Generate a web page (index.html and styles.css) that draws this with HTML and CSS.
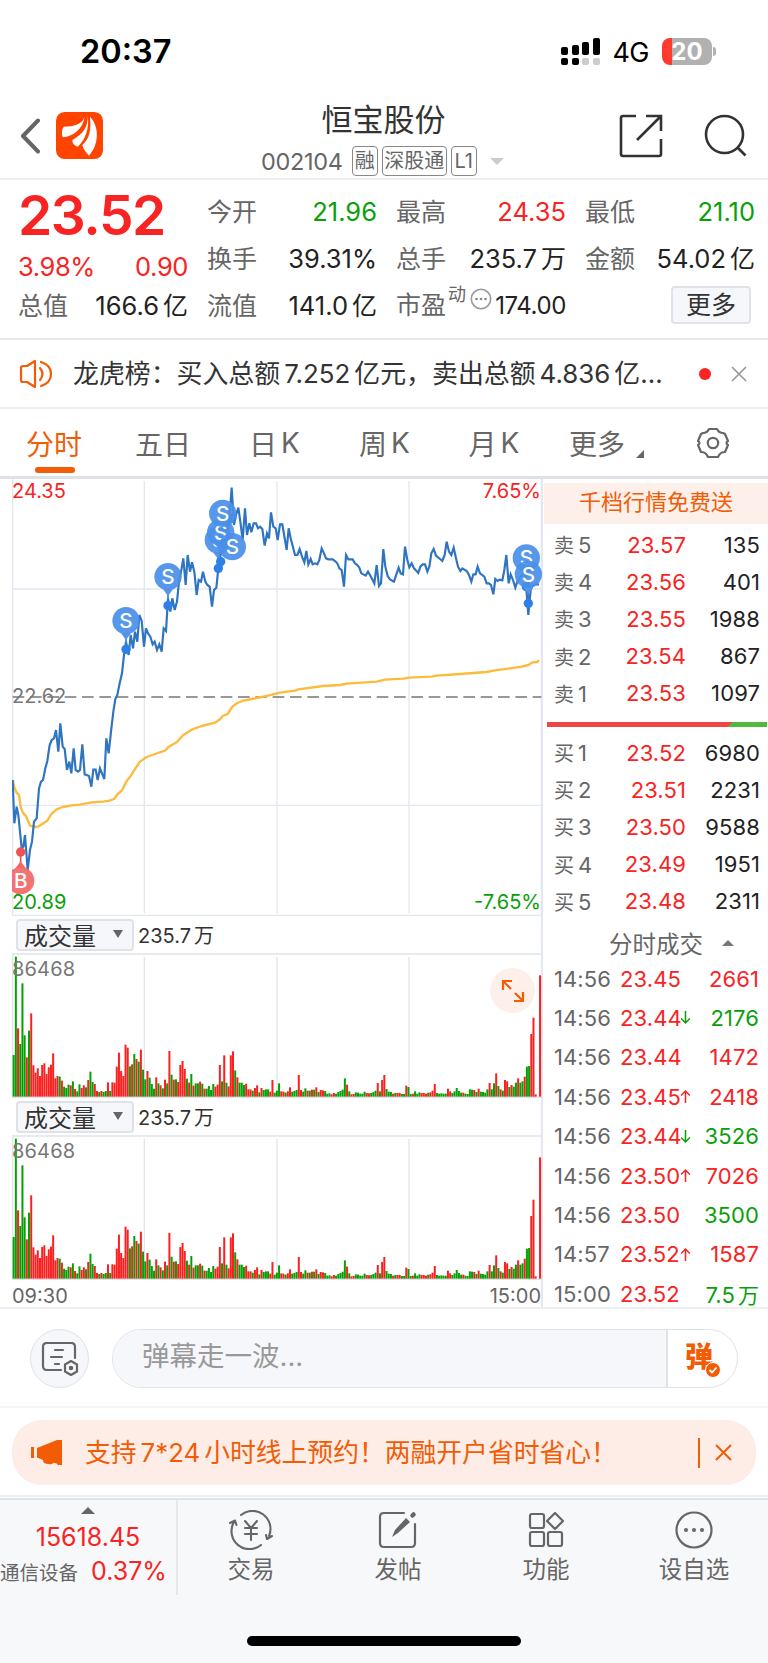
FILE: index.html
```html
<!DOCTYPE html>
<html lang="zh-CN">
<head>
    <meta charset="UTF-8">
    <meta name="viewport" content="width=device-width, initial-scale=1.0">
    <title>恒宝股份 002104</title>
    <link rel="stylesheet" href="styles.css">
</head>
<body>
    <div class="status-bar">
        <span class="clock">20:37</span>
        <div class="status-right">
            <svg class="signal" width="39" height="28" viewBox="0 0 39 28">
                <g fill="#000">
                    <rect x="0" y="9" width="7" height="8" rx="2"/><rect x="11" y="7" width="7" height="10" rx="2"/>
                    <rect x="21" y="4" width="7" height="13" rx="2"/><rect x="32" y="0" width="7" height="17" rx="2"/>
                    <rect x="0" y="20" width="7" height="7" rx="2"/><rect x="11" y="20" width="7" height="7" rx="2"/>
                </g>
                <rect x="21" y="20" width="7" height="7" rx="2" fill="#ccc"/><rect x="32" y="20" width="7" height="7" rx="2" fill="#ccc"/>
            </svg>
            <span class="network">4G</span>
            <span class="battery">20</span>
            <span class="battery-tip"></span>
        </div>
    </div>

    <header class="header">
        <div class="header-left">
            <svg width="22" height="36" viewBox="0 0 22 36"><path d="M18 2.500 3 18 18 33.500" fill="none" stroke="#666" stroke-width="4" stroke-linecap="round" stroke-linejoin="round"/></svg>
            <svg class="logo" width="47" height="47" viewBox="0 0 141 141">
                <rect width="141" height="141" rx="26" fill="#ff4400"/>
                <path d="M86 14C80 34 58 44 23 44 17 54 16 66 20 76 52 72 80 52 86 14Z" fill="#fff"/>
                <path d="M95 12C96 44 82 66 50 83 47 93 54 100 65 104 88 84 101 48 95 12Z" fill="#fff"/>
                <path d="M102 14C106 56 101 78 79 99 82 112 90 122 99 131 129 98 131 44 102 14Z" fill="#fff"/>
            </svg>
        </div>
        <div class="header-title">
            <h1>恒宝股份</h1>
            <div class="code-row">
                <span class="code">002104</span>
                <span class="tag">融</span><span class="tag tag-wide">深股通</span><span class="tag">L1</span>
                <span class="caret"></span>
            </div>
        </div>
        <div class="header-right">
            <svg width="44" height="44" viewBox="0 0 44 44" fill="none" stroke="#333" stroke-width="2.600">
                <path d="M17 2H4Q2 2 2 4V40Q2 42 4 42H40Q42 42 42 40V25"/><path d="M27 2H42V17M42 2 18 26"/>
            </svg>
            <svg width="43" height="43" viewBox="0 0 43 43" fill="none" stroke="#333" stroke-width="2.600">
                <circle cx="20.500" cy="20.500" r="18.500"/><path d="M33 33 41.500 41.500"/>
            </svg>
        </div>
    </header>

    <section class="quote">
        <div class="quote-main">
            <div class="price red">23.52</div>
            <div class="change red"><span>3.98%</span><span>0.90</span></div>
            <div class="cell"><label>总值</label><b>166.6<i>亿</i></b></div>
        </div>
        <div class="quote-col">
            <div class="cell"><label>今开</label><b class="green">21.96</b></div>
            <div class="cell"><label>换手</label><b>39.31%</b></div>
            <div class="cell"><label>流值</label><b>141.0<i>亿</i></b></div>
        </div>
        <div class="quote-col">
            <div class="cell"><label>最高</label><b class="red">24.35</b></div>
            <div class="cell"><label>总手</label><b>235.7<i>万</i></b></div>
            <div class="cell pe"><label>市盈<sup>动</sup></label>
                <svg class="more-dots" width="22" height="22" viewBox="0 0 22 22"><circle cx="11" cy="11" r="9.700" fill="none" stroke="#999" stroke-width="1.600"/><g fill="#888"><circle cx="6.500" cy="11" r="1.300"/><circle cx="11" cy="11" r="1.300"/><circle cx="15.500" cy="11" r="1.300"/></g></svg>
                <b>174.00</b></div>
        </div>
        <div class="quote-col">
            <div class="cell"><label>最低</label><b class="green">21.10</b></div>
            <div class="cell"><label>金额</label><b>54.02<i>亿</i></b></div>
            <div class="cell"><button class="more-btn">更多</button></div>
        </div>
    </section>

    <section class="notice">
        <svg width="34" height="30" viewBox="0 0 34 30" fill="none" stroke="#f25c05" stroke-width="2.200" stroke-linejoin="round" stroke-linecap="round">
            <path d="M16 2V28L8 23H4Q2 23 2 21V9Q2 7 4 7H8Z"/><path d="M21 9Q26 15 21 21M22 3Q32 6 32 15 32 24 22 27"/>
        </svg>
        <p>龙虎榜：买入总额<em>7.252</em>亿元，卖出总额<em>4.836</em>亿...</p>
        <span class="dot"></span>
        <svg width="16" height="16" viewBox="0 0 16 16"><path d="M1 1 15 15M15 1 1 15" stroke="#999" stroke-width="1.700"/></svg>
    </section>

    <nav class="tabs">
        <a class="active">分时</a>
        <a>五日</a>
        <a>日<em>K</em></a>
        <a>周<em>K</em></a>
        <a>月<em>K</em></a>
        <a>更多<span class="corner"></span></a>
        <a><svg width="32" height="32" viewBox="0 0 32 32" fill="none" stroke="#666" stroke-width="2.200" stroke-linejoin="round"><path d="M12 2H20Q22 6 26 6L28 7 31 14Q28 16 31 18L28 25Q23 25 21 30H11Q9 25 4 25L1 18Q4 16 1 14L4 7 6 6Q10 6 12 2Z"/><circle cx="16" cy="16" r="5.200"/></svg></a>
    </nav>

    <main class="market">
        <div class="charts">
            <svg class="price-chart" width="530" height="437" viewBox="36 12 1590 1311">
                <g stroke="#e3e7ef" stroke-width="4">
                    <path d="M38 9V1320M433 18V1315M831 18V1315M1227 18V1315M1624 9V1320M38 342H1624M38 991H1624M36 1321H1626"/>
                </g>
                <path d="M38 666H1624" stroke="#777" stroke-width="4" stroke-dasharray="35 17"/>
                <g font-size="60">
                    <text x="36" y="69" fill="#f82323">24.35</text>
                    <text x="1623" y="69" fill="#f82323" text-anchor="end">7.65%</text>
                    <text x="36" y="685" fill="#777">22.62</text>
                    <text x="36" y="1301" fill="#0a9f0a">20.89</text>
                    <text x="1623" y="1301" fill="#0a9f0a" text-anchor="end">-7.65%</text>
                </g>
                <polyline id="avgLine" fill="none" stroke="#fdbb3c" stroke-width="7" stroke-linejoin="round"/>
                <polyline id="priceLine" fill="none" stroke="#2f74c0" stroke-width="6.5"/>
                <g id="markers"></g>
            </svg>
            <div class="vol-head"><button>成交量<span></span></button><em>235.7<i>万</i></em></div>
            <div class="vol-box">
                <svg class="vol-chart" width="530" height="145" viewBox="36 129 1590 435"></svg>
                <span class="expand"><svg width="24" height="24" viewBox="0 0 24 24" fill="none" stroke="#f25c05" stroke-width="2.200"><path d="M2 11V2H11M2 2 10 10M22 13V22H13M22 22 14 14"/></svg></span>
            </div>
            <div class="vol-head"><button>成交量<span></span></button><em>235.7<i>万</i></em></div>
            <div class="vol-box">
                <svg class="vol-chart" width="530" height="145" viewBox="36 129 1590 435"></svg>
            </div>
            <div class="time-axis"><span>09:30</span><span>15:00</span></div>
        </div>

        <aside class="book">
            <div class="promo-top">千档行情免费送</div>
            <div class="level"><span>卖<em>5</em></span><span class="red">23.57</span><span>135</span></div>
            <div class="level"><span>卖<em>4</em></span><span class="red">23.56</span><span>401</span></div>
            <div class="level"><span>卖<em>3</em></span><span class="red">23.55</span><span>1988</span></div>
            <div class="level"><span>卖<em>2</em></span><span class="red">23.54</span><span>867</span></div>
            <div class="level"><span>卖<em>1</em></span><span class="red">23.53</span><span>1097</span></div>
            <div class="ratio"></div>
            <div class="level"><span>买<em>1</em></span><span class="red">23.52</span><span>6980</span></div>
            <div class="level"><span>买<em>2</em></span><span class="red">23.51</span><span>2231</span></div>
            <div class="level"><span>买<em>3</em></span><span class="red">23.50</span><span>9588</span></div>
            <div class="level"><span>买<em>4</em></span><span class="red">23.49</span><span>1951</span></div>
            <div class="level"><span>买<em>5</em></span><span class="red">23.48</span><span>2311</span></div>
            <div class="trades-title">分时成交<span></span></div>
            <div class="trade"><span>14:56</span><span class="red">23.45</span><span></span><span class="red">2661</span></div>
            <div class="trade"><span>14:56</span><span class="red">23.44</span><svg class="down" viewBox="0 0 10 12"><path d="M5 0V11M1 7 5 11 9 7"/></svg><span class="green">2176</span></div>
            <div class="trade"><span>14:56</span><span class="red">23.44</span><span></span><span class="red">1472</span></div>
            <div class="trade"><span>14:56</span><span class="red">23.45</span><svg class="up" viewBox="0 0 10 12"><path d="M5 12V1M1 5 5 1 9 5"/></svg><span class="red">2418</span></div>
            <div class="trade"><span>14:56</span><span class="red">23.44</span><svg class="down" viewBox="0 0 10 12"><path d="M5 0V11M1 7 5 11 9 7"/></svg><span class="green">3526</span></div>
            <div class="trade"><span>14:56</span><span class="red">23.50</span><svg class="up" viewBox="0 0 10 12"><path d="M5 12V1M1 5 5 1 9 5"/></svg><span class="red">7026</span></div>
            <div class="trade"><span>14:56</span><span class="red">23.50</span><span></span><span class="green">3500</span></div>
            <div class="trade"><span>14:57</span><span class="red">23.52</span><svg class="up" viewBox="0 0 10 12"><path d="M5 12V1M1 5 5 1 9 5"/></svg><span class="red">1587</span></div>
            <div class="trade"><span>15:00</span><span class="red">23.52</span><span></span><span class="green">7.5<i>万</i></span></div>
        </aside>
    </main>

    <section class="comment">
        <button class="round-btn">
            <svg width="38" height="34" viewBox="0 0 38 34" fill="none" stroke="#666" stroke-width="2.200" stroke-linecap="round" stroke-linejoin="round">
                <path d="M20 28H6Q2 28 2 24V5Q2 1 6 1H30Q34 1 34 5V16"/><path d="M14 8H22M10 15H21M14 22H18"/>
                <path d="M30 19 36 22.500V29.500L30 33 24 29.500V22.500Z"/><circle cx="30" cy="26" r="1.200" fill="#666"/>
            </svg>
        </button>
        <div class="comment-input">
            <span class="placeholder">弹幕走一波...</span>
            <span class="danmu">弹<svg width="16" height="16" viewBox="0 0 16 16"><circle cx="8" cy="8" r="7.500" fill="#f25c05" stroke="#fff" stroke-width="1"/><path d="M4.500 8 7 10.500 11.500 5.500" fill="none" stroke="#fff" stroke-width="1.800"/></svg></span>
        </div>
    </section>

    <section class="promo">
        <div class="promo-pill">
            <svg width="31" height="27" viewBox="0 0 31 27" fill="#f25c05"><rect x="0" y="8" width="3" height="11"/><path d="M6 9 26 1H31V26H27L25 24H22Q21 26 17 25 12 25 12 21L6 18.500Z"/></svg>
            <p>支持<em>7*24</em>小时线上预约！两融开户省时省心！</p>
            <span class="bar"></span>
            <svg width="17" height="17" viewBox="0 0 17 17"><path d="M1 1 16 16M16 1 1 16" stroke="#f25c05" stroke-width="2"/></svg>
        </div>
    </section>

    <footer class="footer">
        <div class="index-cell">
            <span class="up-tri"></span>
            <div class="index-value red">15618.45</div>
            <div class="index-row"><span>通信设备</span><span class="red">0.37%</span></div>
        </div>
        <a><svg width="44" height="40" viewBox="0 0 44 40" fill="none" stroke="#666" stroke-width="2.100" stroke-linecap="round" stroke-linejoin="round">
            <path d="M12 5A18 18 0 0 1 40 26M32 35A18 18 0 0 1 5 12M1 13 6 10.500 7.500 15M43 26 38 29 37 25"/>
            <path d="M16 11 22 18 28 11M16 18H28M16 24H28M22 18V30"/></svg>交易</a>
        <a><svg width="44" height="40" viewBox="0 0 44 40" fill="none" stroke="#666" stroke-width="2.200" stroke-linecap="round">
            <path d="M28 3H8Q4 3 4 7V33Q4 37 8 37H35Q39 37 39 33V14"/><path d="M36.500 5.500 37.500 4.500" stroke-width="4.500"/><path d="M30 8 34 12 22 23 16 27 19 20Z" fill="#666" stroke="none"/></svg>发帖</a>
        <a><svg width="44" height="40" viewBox="0 0 44 40" fill="none" stroke="#666" stroke-width="2.200" stroke-linejoin="round">
            <rect x="6" y="4" width="14" height="14" rx="2"/><rect x="6" y="22" width="14" height="14" rx="2"/><rect x="24" y="22" width="14" height="14" rx="2"/><path d="M31 3 39 11 31 19 23 11Z"/></svg>功能</a>
        <a><svg width="44" height="40" viewBox="0 0 44 40"><circle cx="22" cy="20" r="17.500" fill="none" stroke="#666" stroke-width="2.200"/><g fill="#666"><circle cx="14" cy="20" r="2"/><circle cx="22" cy="20" r="2"/><circle cx="30" cy="20" r="2"/></g></svg>设自选</a>
    </footer>
    <div class="home-area"><span></span></div>

    <script src="script.js"></script>
</body>
</html>
```
FILE: styles.css
```css
* {
    box-sizing: border-box;
}
body {
    margin: 0;
    width: 768px;
    height: 1663px;
    overflow: hidden;
    background: #fff;
    color: #222;
    font-family: Inter, "Noto Sans CJK SC", sans-serif;
}
em, i, b {
    font-style: normal;
    font-weight: 400;
}
h1, p {
    margin: 0;
    font-weight: 400;
}
button {
    padding: 0;
    font-family: inherit;
    color: #333;
    background: #f6f7fa;
    border: 2px solid #dfe2e8;
    border-radius: 4px;
}
svg {
    display: block;
    flex: none;
}
.red {
    color: #f82323 !important;
}
.green {
    color: #0a9f0a !important;
}

/* status bar */
.status-bar {
    display: flex;
    justify-content: space-between;
    align-items: center;
    height: 102px;
    padding: 1px 52px 0 80px;
}
.clock {
    font-size: 32.5px;
    font-weight: 600;
    color: #000;
}
.status-right {
    display: flex;
    align-items: center;
}
.network {
    margin: 2px 13px 0 12px;
    font-size: 27px;
    letter-spacing: -0.5px;
    color: #000;
}
.battery {
    width: 50px;
    height: 27px;
    border-radius: 8px;
    background: linear-gradient(90deg, #ff3b30 10px, #b1b1b1 10px);
    color: #fff;
    font-size: 24px;
    font-weight: 700;
    line-height: 27px;
    text-align: center;
}
.battery-tip {
    width: 3px;
    height: 9px;
    margin-left: 1px;
    border-radius: 0 4px 4px 0;
    background: #b1b1b1;
}

/* header */
.header {
    display: grid;
    grid-template-columns: 230px 1fr 230px;
    height: 78px;
    border-bottom: 2px solid #eee;
}
.header-left {
    display: flex;
    align-items: center;
    padding: 0 0 9px 20px;
}
.header-left .logo {
    margin-left: 14px;
}
.header-title {
    text-align: center;
    color: #333;
}
.header-title h1 {
    margin-right: 1px;
    font-size: 31px;
    line-height: 35px;
}
.code-row {
    display: flex;
    align-items: center;
    height: 30px;
    margin: 9px 0 0 31px;
    color: #666;
}
.code {
    margin-right: 9px;
    font-size: 23.5px;
    letter-spacing: -0.3px;
}
.tag {
    width: 26px;
    height: 30px;
    margin-right: 4px;
    border: 1.5px solid #888;
    border-radius: 4px;
    font-size: 20px;
    line-height: 28px;
}
.tag-wide {
    width: 65px;
}
.caret {
    margin-left: 9px;
    border: 7px solid transparent;
    border-top-color: #ccc;
    border-bottom: none;
}
.header-right {
    display: flex;
    justify-content: flex-end;
    align-items: center;
    gap: 41px;
    padding: 0 21px 9px 0;
}

/* quote numbers */
.quote {
    display: grid;
    grid-template-columns: repeat(4, 170px);
    column-gap: 19px;
    height: 160px;
    padding: 6px 0 0 18px;
    border-bottom: 2px solid #e9e9e9;
}
.price {
    height: 67px;
    font-size: 55px;
    font-weight: 600;
    line-height: 59px;
    letter-spacing: -1.4px;
}
.change {
    display: flex;
    justify-content: space-between;
    align-items: center;
    height: 27px;
    font-size: 25.5px;
    letter-spacing: -0.4px;
}
.cell {
    display: flex;
    align-items: baseline;
    height: 47px;
    font-size: 25px;
    line-height: 51px;
    white-space: nowrap;
    color: #222;
}
.cell label {
    color: #666;
}
.cell b {
    margin-left: auto;
    font-size: 25.5px;
}
.cell i {
    margin-left: 4px;
    font-size: 25px;
}
.pe b {
    font-size: 24px;
    letter-spacing: -0.4px;
}
.cell sup {
    position: relative;
    top: -13px;
    margin-left: 2px;
    font-size: 18px;
    line-height: 0;
    vertical-align: baseline;
}
.more-dots {
    align-self: center;
    margin: -9px 0 0 4px;
}
.more-btn {
    align-self: center;
    width: 80px;
    height: 38px;
    margin: 2px 4px 0 auto;
    font-size: 25px;
    line-height: 32px;
}

/* notice */
.notice {
    display: flex;
    align-items: center;
    height: 69px;
    padding-left: 19px;
    border-bottom: 2px solid #eee;
    color: #333;
}
.notice p {
    width: 610px;
    margin-left: 20px;
    font-size: 25.9px;
    line-height: 40px;
    white-space: nowrap;
}
.notice p em {
    margin: 0 4px;
}
.dot {
    width: 12px;
    height: 12px;
    margin: 0 20px 0 16px;
    border-radius: 50%;
    background: #f82323;
}

/* tabs */
.tabs {
    display: grid;
    grid-template-columns: 108px 110px 113px 107px 112px 113px 100px;
    height: 70px;
    border-bottom: 3px solid #dfe1e8;
}
.tabs a {
    position: relative;
    display: flex;
    justify-content: center;
    align-items: center;
    font-size: 28px;
    color: #666;
}
.tabs em {
    margin-left: 4px;
}
.tabs .active {
    color: #f25c05;
}
.tabs .active::after {
    content: "";
    position: absolute;
    left: 35px;
    bottom: 3px;
    width: 40px;
    height: 6px;
    border-radius: 3px;
    background: #f25c05;
}
.corner {
    margin: 22px 0 0 11px;
    border-left: 8px solid transparent;
    border-bottom: 8px solid #666;
}

/* charts */
.market {
    display: flex;
    height: 830px;
    border-bottom: 2px solid #eceef2;
}
.charts {
    width: 543px;
    padding-left: 12px;
    border-right: 2px solid #e3e7ef;
}
.vol-head {
    display: flex;
    align-items: center;
    height: 37px;
    padding-left: 4px;
    font-size: 20px;
    color: #333;
}
.vol-head button {
    display: flex;
    align-items: center;
    width: 118px;
    height: 32px;
    margin-right: 4px;
    padding: 0 0 1px 6px;
    font-size: 24px;
}
.vol-head button span {
    margin-left: 17px;
    border: 5px solid transparent;
    border-top: 8px solid #666;
    border-bottom: none;
}
.vol-head i {
    margin-left: 3px;
}
.vol-box {
    position: relative;
    height: 145px;
}
.expand {
    position: absolute;
    top: 15px;
    left: 478px;
    display: flex;
    justify-content: center;
    align-items: center;
    width: 45px;
    height: 45px;
    border-radius: 50%;
    background: #fdf0ea;
}
.time-axis {
    display: flex;
    justify-content: space-between;
    font-size: 20px;
    line-height: 33px;
    color: #666;
}

/* order book */
.book {
    width: 225px;
    padding-top: 4px;
    font-size: 22px;
    letter-spacing: 0.1px;
}
.promo-top {
    height: 41px;
    margin: 0 0 2px 1px;
    background: #fdf0ea;
    color: #f25c05;
    line-height: 38px;
    text-align: center;
    letter-spacing: 0;
}
.level {
    display: grid;
    grid-template-columns: 60px 72px 74px;
    align-items: center;
    height: 37.2px;
    padding-left: 11px;
    text-align: right;
}
.level span:first-child {
    font-size: 20px;
    text-align: left;
    color: #666;
}
.level em {
    margin-left: 4px;
    font-size: 22px;
}
.ratio {
    height: 5px;
    margin: 10px 1px 7px 4px;
    background: linear-gradient(135deg, #ee4545 82.5%, #52b83e 82.5%);
}
.trades-title {
    display: flex;
    align-items: center;
    height: 39px;
    padding: 8px 0 0 66px;
    font-size: 23.5px;
    letter-spacing: 0;
    color: #666;
}
.trades-title span {
    margin-left: 19px;
    border: 6px solid transparent;
    border-top: none;
    border-bottom: 6px solid #777;
}
.trade {
    display: grid;
    grid-template-columns: 66px 60px 12px 67px;
    align-items: center;
    height: 39.4px;
    padding-left: 11px;
    color: #666;
}
.trade > :last-child {
    text-align: right;
}
.trade svg {
    width: 11px;
    height: 13px;
    fill: none;
    stroke-width: 1.4;
}
.trade .up {
    stroke: #f82323;
}
.trade .down {
    stroke: #0a9f0a;
}
.trade i {
    margin-left: 3px;
    font-size: 21px;
}

/* comment bar */
.comment {
    display: flex;
    align-items: center;
    height: 99px;
    padding: 2px 0 0 30px;
    border-bottom: 2px solid #f5f5f6;
}
.round-btn {
    display: flex;
    justify-content: center;
    align-items: center;
    width: 59px;
    height: 59px;
    border-radius: 50%;
    border-width: 1.5px;
}
.comment-input {
    display: flex;
    width: 626px;
    height: 59px;
    margin-left: 23px;
    border: 1.5px solid #dfe2e8;
    border-radius: 30px;
    overflow: hidden;
}
.placeholder {
    flex: 1;
    padding-left: 29px;
    background: #f6f7fa;
    border-right: 2px solid #dfe2e8;
    font-size: 27.5px;
    line-height: 52px;
    color: #999;
}
.danmu {
    position: relative;
    width: 69px;
    padding-left: 17px;
    font-size: 28px;
    font-weight: 900;
    line-height: 55px;
    color: #f25c05;
}
.danmu svg {
    position: absolute;
    left: 37px;
    top: 32px;
}

/* promo pill */
.promo {
    height: 89px;
    padding: 12px 12px 0;
    border-bottom: 2px solid #eee;
}
.promo-pill {
    display: flex;
    align-items: center;
    height: 65px;
    padding-left: 19px;
    border-radius: 30px;
    background: #fdede6;
    color: #f25c05;
}
.promo-pill p {
    width: 613px;
    margin-left: 23px;
    font-size: 25.8px;
    line-height: 40px;
    font-feature-settings: "calt" 0;
    white-space: nowrap;
}
.promo-pill em {
    margin: 0 4px;
}
.bar {
    width: 1.5px;
    height: 30px;
    margin-right: 15px;
    background: #f25c05;
}

/* footer */
.footer {
    display: grid;
    grid-template-columns: 178px 146px 148px 148px 148px;
    height: 97px;
    margin-top: 1px;
    border-top: 2px solid #dfe2e8;
    background: #f7f8fa;
}
.footer a {
    display: flex;
    flex-direction: column;
    align-items: center;
    padding-top: 10px;
    font-size: 23.5px;
    line-height: 39px;
    color: #666;
}
.index-cell {
    border-right: 2px solid #e6e8ec;
    text-align: center;
}
.up-tri {
    display: block;
    width: 0;
    margin: 7px auto 0;
    border: 7px solid transparent;
    border-top: none;
    border-bottom-color: #666;
}
.index-value {
    margin-top: 7px;
    font-size: 25px;
    line-height: 32px;
}
.index-row {
    display: flex;
    align-items: center;
    height: 36px;
    font-size: 19.5px;
    color: #666;
}
.index-row .red {
    margin-left: 13px;
    font-size: 25px;
}
.home-area {
    height: 70px;
    padding-top: 41px;
    background: #f7f8fa;
}
.home-area span {
    display: block;
    width: 274px;
    height: 10px;
    margin: 0 auto;
    border-radius: 5px;
    background: #000;
}
```
FILE: script.js
```js
// chart units are 1/3 px
const SVG_NS = "http://www.w3.org/2000/svg";

const price = "38,915 43,1045 50,995 55,1020 65,1120 70,1115 75,1080 83,1185 90,1125 96,1100 102,1040 110,1030 117,940 123,920 129,915 136,880 142,858 149,810 155,795 162,790 168,765 175,830 181,745 188,815 194,822 201,885 208,860 214,895 221,820 227,885 234,890 240,885 247,808 254,898 260,900 267,903 274,935 280,884 287,884 293,915 300,880 306,895 313,912 319,790 326,835 333,770 340,710 346,672 352,660 359,625 366,595 372,540 378,500 386,540 392,480 399,520 405,470 412,500 418,420 425,438 432,515 438,460 444,475 451,485 458,508 464,500 471,525 478,508 485,530 491,460 498,468 504,370 511,410 517,370 524,405 531,380 537,320 544,285 550,250 557,330 563,240 570,290 576,262 583,290 590,360 596,315 603,320 609,290 616,320 622,330 629,335 636,395 642,345 649,338 655,280 662,220 668,190 675,210 681,180 688,130 695,38 702,150 708,120 715,98 721,140 728,195 735,100 741,180 748,145 754,172 761,145 768,145 774,160 780,155 787,162 794,212 801,175 807,190 813,112 820,155 827,160 833,195 840,148 847,148 860,225 866,160 872,190 885,240 892,240 899,222 906,245 913,262 919,228 925,268 932,252 938,268 945,265 952,268 958,255 965,220 972,235 978,250 985,253 998,253 1005,258 1012,265 1018,280 1025,285 1032,335 1038,240 1045,253 1058,253 1065,265 1072,270 1078,278 1084,295 1097,302 1104,290 1110,300 1123,325 1130,270 1137,333 1143,325 1150,222 1156,275 1163,303 1170,313 1182,320 1190,295 1196,278 1202,295 1209,298 1215,215 1222,255 1228,277 1235,265 1242,280 1255,294 1261,275 1268,268 1275,268 1282,290 1288,275 1294,235 1301,222 1308,242 1320,252 1327,258 1334,240 1340,200 1347,230 1354,240 1361,218 1368,250 1374,275 1381,288 1387,280 1400,288 1407,300 1414,320 1420,298 1427,298 1433,275 1440,295 1453,305 1460,325 1467,325 1473,330 1480,358 1486,312 1493,318 1500,314 1507,316 1513,285 1519,240 1526,325 1532,298 1539,315 1546,338 1552,320 1565,300 1572,290 1579,340 1585,420 1592,345 1598,332 1605,328 1617,328";
const average = "38,915 43,937 50,953 57,960 63,1000 70,1015 77,1022 83,1035 90,1052 103,1056 116,1054 130,1045 142,1037 155,1016 170,1003 188,996 215,991 240,989 275,982 310,980 328,977 342,972 353,957 366,946 380,918 390,906 405,882 420,860 440,846 465,837 495,827 505,816 530,802 550,780 575,764 605,753 645,743 660,733 668,723 683,717 697,695 712,684 730,677 755,672 785,666 805,662 840,653 885,647 895,643 970,633 1020,630 1040,626 1130,620 1155,614 1210,611 1225,608 1295,605 1310,602 1380,597 1460,591 1485,586 1530,580 1565,575 1585,570 1598,562 1612,561 1617,555";
document.getElementById("priceLine").setAttribute("points", price);
document.getElementById("avgLine").setAttribute("points", average);

function add(parent, name, attrs, text) {
    const el = document.createElementNS(SVG_NS, name);
    for (const key in attrs) el.setAttribute(key, attrs[key]);
    if (text) el.textContent = text;
    parent.appendChild(el);
}

// buy / sell pins: letter, pin centre, dot centre
const pins = [
    ["S", 378, 437, 378, 523],
    ["S", 504, 305, 504, 392],
    ["S", 655, 195, 655, 280],
    ["S", 662, 172, 662, 260],
    ["S", 668, 115, 695, 130],
    ["S", 697, 215, 675, 205],
    ["S", 1579, 249, 1579, 335],
    ["S", 1585, 298, 1585, 385],
    ["B", 62, 1217, 62, 1131]
];
const markers = document.getElementById("markers");
pins.forEach(([letter, x, y, dx, dy]) => {
    const buy = letter === "B";
    const side = buy ? -1 : 1;
    const color = buy ? "#f15050" : "#2f80e4";
    add(markers, "circle", { cx: dx, cy: dy, r: 14, fill: color });
    if (x === dx) {
        add(markers, "path", { d: `M${x} ${y + side * 45}V${dy}`, stroke: color, "stroke-width": 5 });
        add(markers, "path", { d: `M${x - 15} ${y + side * 38}L${x} ${y + side * 58}L${x + 15} ${y + side * 38}Z`, fill: buy ? "#f26666" : "#5595e8" });
    }
    add(markers, "circle", { cx: x, cy: y, r: 41, fill: buy ? "#f26666" : "#4a8fe8", "fill-opacity": 0.92 });
    add(markers, "text", { x: x, y: y + 22, "font-size": 62, "font-weight": 500, fill: "#fff", "text-anchor": "middle" }, letter);
});

// one bar a minute, g = down, r = up
const volume = "g125 g420 r205 g158 g340 g184 r118 g198 r250 r94 r72 r85 r62 r95 r100 r68 r88 r96 r130 r55 r62 g60 r48 g30 g26 g36 r34 g46 r23 g16 g37 r26 r34 g28 r50 g75 g44 r38 r17 g14 r17 g14 g17 r43 g17 r43 r42 r90 r132 r77 r62 r156 r147 g91 r97 g128 r113 g105 r141 g81 g52 r77 g57 g38 g24 r58 g40 r34 g25 r51 g40 r137 g66 r51 g52 r44 r95 r107 r83 g54 r42 g68 r33 g40 g40 r45 g39 r24 g24 g32 g20 g38 r30 r36 r95 g46 r124 g42 r31 r124 r136 g79 r58 g42 g42 g35 r39 r22 r22 g18 r26 r34 g13 r26 g20 g22 g22 r15 r50 g12 g18 g40 r16 r15 g12 r16 r28 g15 g17 g20 r65 r20 g15 g25 r18 g18 r21 g21 r28 g14 r20 r19 g17 g9 g10 r7 r11 g9 g14 g17 g21 g55 r36 g16 r7 r8 g13 g12 g9 g9 g15 r11 r10 g11 g14 g18 r41 g16 r50 r65 g23 g15 g14 r9 g11 r11 r11 g8 g8 r33 g29 g8 r9 g16 g9 g13 r11 r11 r9 g12 r13 r18 r38 g11 g9 g10 g9 g9 r24 r16 g11 g16 g26 g17 g12 r12 g9 g8 g22 g21 r20 g14 r24 g15 g14 g12 g22 r41 g22 g40 r70 g32 r22 g18 r50 r46 g29 r35 g30 g42 r55 g42 g46 r60 g90 g92 r188 r237 r7 r0 r364".split(" ");
document.querySelectorAll(".vol-chart").forEach((svg) => {
    add(svg, "path", { d: "M36 132H1626M38 129V564M433 141V560M831 141V560M1227 141V560M36 562H1626", stroke: "#e0e4ea", "stroke-width": 4 });
    volume.forEach((bar, i) => {
        const h = Number(bar.slice(1));
        add(svg, "rect", { x: 38 + i * 6.58, y: 560 - h, width: 6, height: h, fill: bar[0] === "g" ? "#05a005" : "#fa2020" });
    });
    add(svg, "text", { x: 36, y: 199, "font-size": 60, "letter-spacing": 0.5, fill: "#777" }, "86468");
});
```
